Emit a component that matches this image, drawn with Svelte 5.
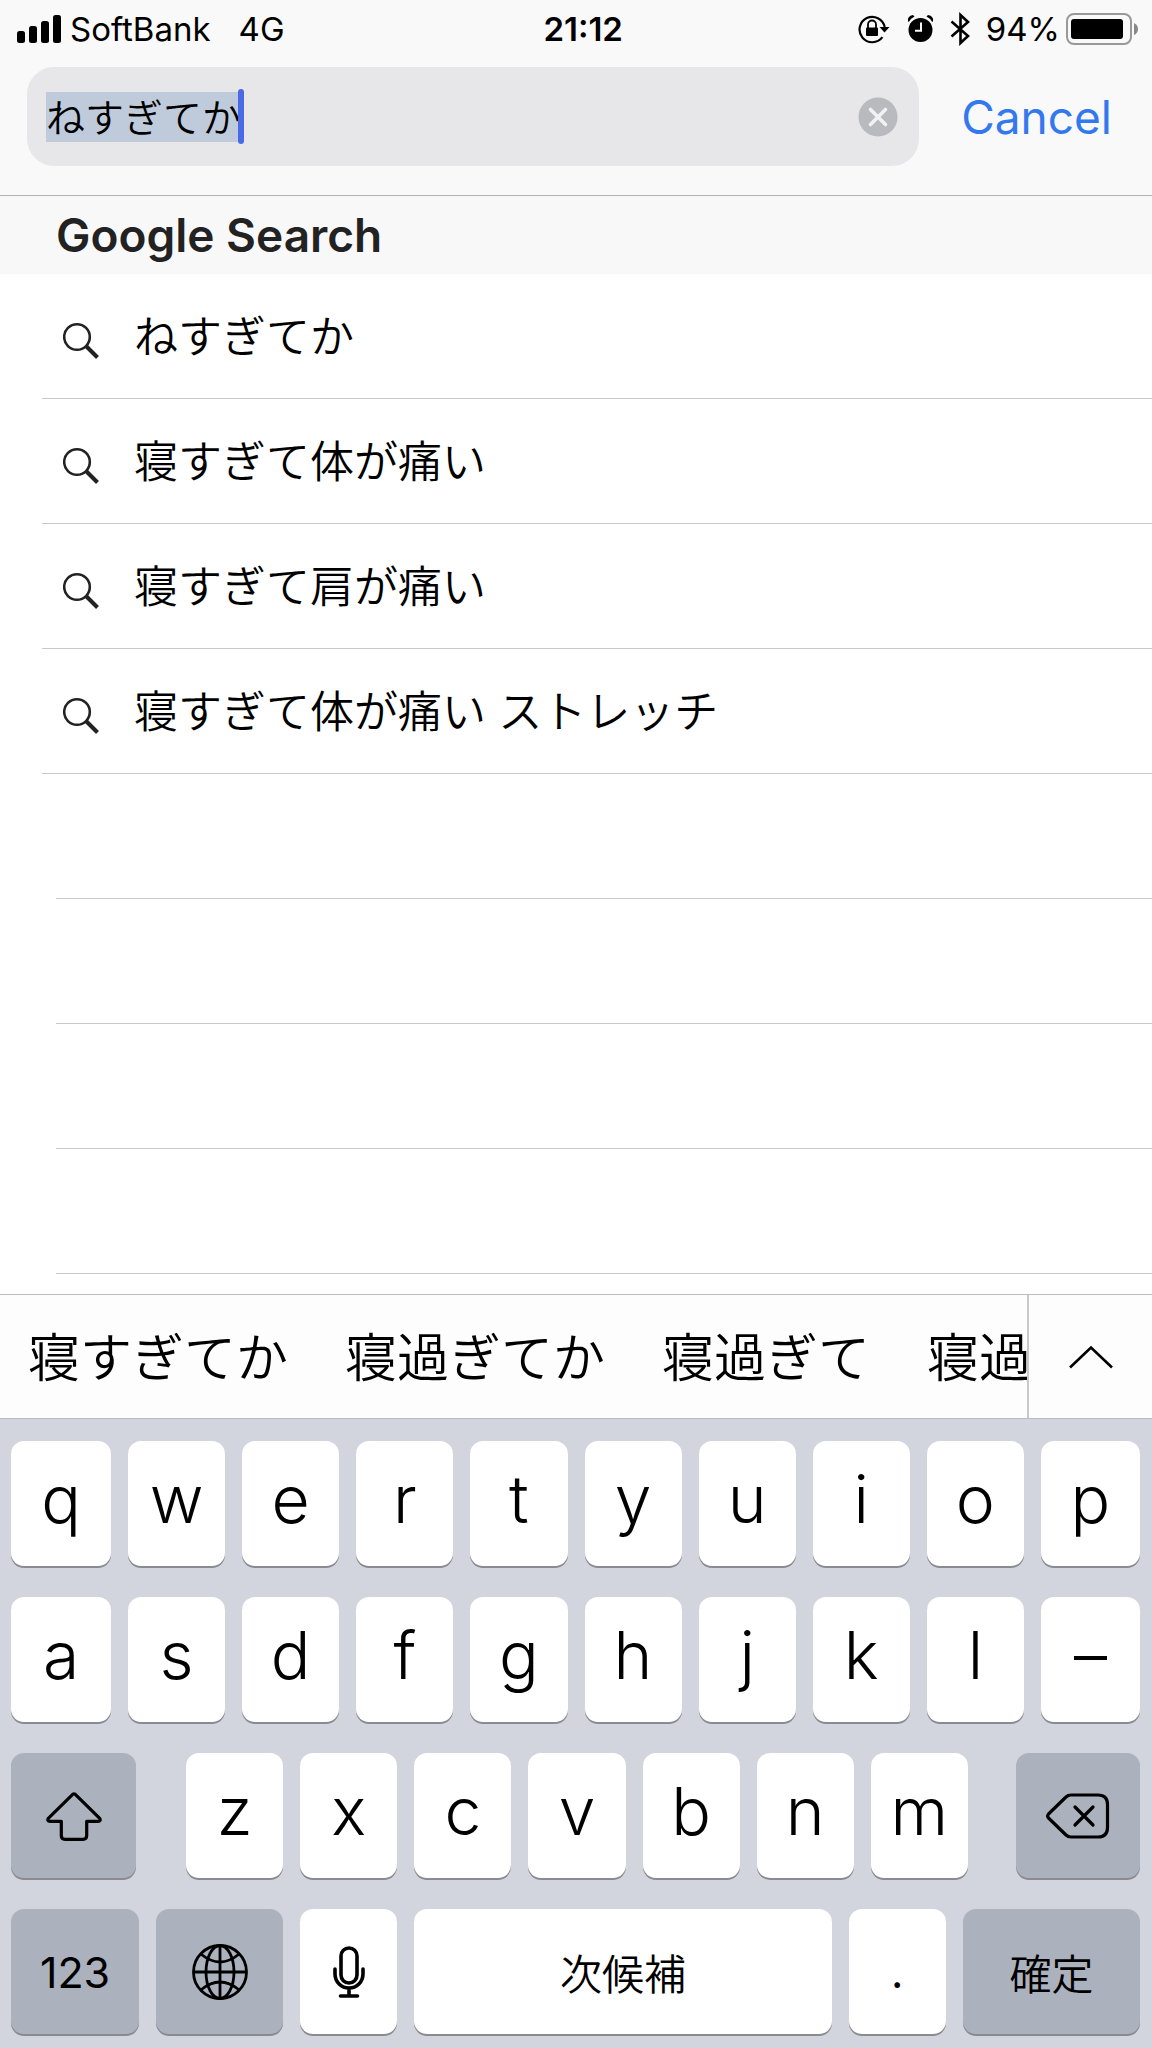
<script>
    let query = 'ねすぎてか';

    const suggestions = [
        'ねすぎてか',
        '寝すぎて体が痛い',
        '寝すぎて肩が痛い',
        '寝すぎて体が痛い ストレッチ'
    ];
    const emptyRows = [1, 2, 3, 4];
    const candidates = ['寝すぎてか', '寝過ぎてか', '寝過ぎて', '寝過ぎ'];

    const topRow = ['q', 'w', 'e', 'r', 't', 'y', 'u', 'i', 'o', 'p'];
    const middleRow = ['a', 's', 'd', 'f', 'g', 'h', 'j', 'k', 'l', '–'];
    const bottomRow = ['z', 'x', 'c', 'v', 'b', 'n', 'm'];

    function type(char) {
        query += char;
    }

    function backspace() {
        query = query.slice(0, -1);
    }

    function clear() {
        query = '';
    }
</script>

<div class="screen">
    <header>
        <div class="status">
            <div class="status-left">
                <svg width="45" height="28" viewBox="0 0 45 28" aria-hidden="true">
                    <rect x="0" y="16" width="8" height="12" rx="2.5" />
                    <rect x="12" y="11" width="8" height="17" rx="2.5" />
                    <rect x="24" y="6" width="8" height="22" rx="2.5" />
                    <rect x="36" y="0" width="8" height="28" rx="2.5" />
                </svg>
                <span class="carrier">SoftBank</span>
                <span>4G</span>
            </div>
            <div class="time">21:12</div>
            <div class="status-right">
                <svg class="lock" width="32" height="30" viewBox="0 0 32 30" aria-hidden="true">
                    <path d="M24.4 23.2 A12.7 12.7 0 1 1 26.7 13" fill="none" stroke="#000" stroke-width="2.2" />
                    <path d="M21.5 13 H31.5 L26.5 18.5 Z" />
                    <rect x="8" y="13.5" width="12" height="8.5" rx="1" />
                    <path d="M10 14 V10.5 a4 4 0 0 1 8 0 V14" fill="none" stroke="#000" stroke-width="1.8" />
                </svg>
                <svg class="alarm" width="27" height="30" viewBox="0 0 27 30" aria-hidden="true">
                    <circle cx="13.5" cy="16" r="12" />
                    <path d="M1 7.500 Q0 2 6 1 L7.500 2.500 Q3.500 4.500 2 7.800 Z M26 7.500 Q27 2 21 1 L19.500 2.500 Q23.500 4.500 25 7.800 Z" />
                    <path d="M14 8.500 V16.700 H8" fill="none" stroke="#f9f9f9" stroke-width="2" />
                </svg>
                <svg class="bluetooth" width="20" height="34" viewBox="0 0 20 34" aria-hidden="true">
                    <path d="M1.500 9.500 L18 24 L10.500 31 V3 L18 10 L1.500 24.500" fill="none" stroke="#000" stroke-width="2.6" />
                </svg>
                <span>94%</span>
                <svg class="battery" width="73" height="32" viewBox="0 0 73 32" aria-hidden="true">
                    <rect x="1" y="1" width="64" height="30" rx="7" fill="none" stroke="#999" stroke-width="2" />
                    <rect x="5" y="6" width="52" height="20" rx="3" />
                    <path d="M68 10 Q72 12 72 16 T68 22 Z" fill="#888" />
                </svg>
            </div>
        </div>

        <div class="search-bar">
            <div class="field">
                <div class="marked">
                    <input type="text" aria-label="Search" bind:value={query}>
                    <span class="caret"></span>
                </div>
                <button type="button" class="clear" aria-label="Clear" on:click={clear}>
                    <svg width="40" height="40" viewBox="0 0 40 40">
                        <circle cx="20" cy="20" r="19.5" fill="#b8babd" />
                        <path d="M12.500 12.500 L27.500 27.500 M27.500 12.500 L12.500 27.500" stroke="#f2f2f3" stroke-width="3.6" stroke-linecap="round" />
                    </svg>
                </button>
            </div>
            <button type="button" class="cancel">Cancel</button>
        </div>
    </header>

    <main>
        <h2>Google Search</h2>
        <ul>
            {#each suggestions as suggestion}
                <li>
                    <button type="button" class="suggestion">
                        <svg width="36" height="50" viewBox="0 0 36 50" aria-hidden="true">
                            <circle cx="14" cy="26" r="12.800" fill="none" stroke="#222" stroke-width="2.600" />
                            <path d="M23 35 L34.500 46.500" stroke="#222" stroke-width="4" />
                        </svg>
                        <span>{suggestion}</span>
                    </button>
                </li>
            {/each}
            {#each emptyRows as row (row)}
                <li class="empty"></li>
            {/each}
        </ul>
    </main>

    <div class="candidates">
        <div class="candidate-list">
            {#each candidates as candidate}
                <button type="button">{candidate}</button>
            {/each}
        </div>
        <button type="button" class="expand" aria-label="Show more">
            <svg width="44" height="24" viewBox="0 0 44 24">
                <path d="M1 22.500 L22 2.500 L43 22.500" fill="none" stroke="#000" stroke-width="2.600" />
            </svg>
        </button>
    </div>

    <div class="keyboard">
        <div class="keys ten">
            {#each topRow as key}
                <button type="button" class="key letter" on:click={() => type(key)}>{key}</button>
            {/each}
        </div>
        <div class="keys ten">
            {#each middleRow as key}
                <button type="button" class="key letter" on:click={() => type(key)}>{key}</button>
            {/each}
        </div>
        <div class="keys third">
            <button type="button" class="key dark shift" aria-label="Shift">
                <svg width="56" height="50" viewBox="0 0 56 50">
                    <path d="M26.700 3.300 L2.300 27.300 Q0.800 30.300 4 30.300 H15.300 V44.500 Q15.300 48.300 19 48.300 H37 Q40.700 48.300 40.700 44.500 V30.300 H52 Q55.200 30.300 53.700 27.300 L29.300 3.300 Q28 2.300 26.700 3.300 Z" fill="none" stroke="#000" stroke-width="3.200" stroke-linejoin="round" />
                </svg>
            </button>
            {#each bottomRow as key}
                <button type="button" class="key letter" on:click={() => type(key)}>{key}</button>
            {/each}
            <button type="button" class="key dark delete" aria-label="Delete" on:click={backspace}>
                <svg width="64" height="48" viewBox="0 0 64 48">
                    <path d="M25 3 H52 Q61.500 3 61.500 12.500 V35.500 Q61.500 45 52 45 H25 Q22 45 20 43 L2.500 26 Q0.800 24 2.500 22 L20 5 Q22 3 25 3 Z" fill="none" stroke="#000" stroke-width="3.200" stroke-linejoin="round" />
                    <path d="M29 15 L47 33 M47 15 L29 33" stroke="#000" stroke-width="3.200" stroke-linecap="round" />
                </svg>
            </button>
        </div>
        <div class="keys fourth">
            <button type="button" class="key dark numbers">123</button>
            <button type="button" class="key dark" aria-label="Next keyboard">
                <svg width="56" height="56" viewBox="0 0 56 56" fill="none" stroke="#000" stroke-width="2.800">
                    <circle cx="28" cy="28" r="26.500" />
                    <ellipse cx="28" cy="28" rx="14" ry="26.500" />
                    <path d="M28 1.500 V54.500 M1.500 28 H54.500" />
                    <path d="M9.500 10.500 Q28 25.500 46.500 10.500 M9.500 45.500 Q28 30.500 46.500 45.500" />
                </svg>
            </button>
            <button type="button" class="key" aria-label="Dictation">
                <svg width="32" height="52" viewBox="0 0 32 52" fill="none" stroke="#000" stroke-width="3.600" stroke-linecap="round">
                    <rect x="8" y="2" width="16" height="35" rx="8" />
                    <path d="M2 23 V28 A14 14 0 0 0 30 28 V23 M16 42 V50 M7.500 50 H24.500" />
                </svg>
            </button>
            <button type="button" class="key">次候補</button>
            <button type="button" class="key numbers" on:click={() => type('.')}>.</button>
            <button type="button" class="key dark">確定</button>
        </div>
    </div>
</div>

<style>
    :global(body) {
        margin: 0;
        background: #fff;
    }

    .screen {
        font-family: Inter, "Noto Sans CJK JP", sans-serif;
        color: #000;
    }

    button {
        border: 0;
        padding: 0;
        margin: 0;
        background: none;
        font: inherit;
        color: inherit;
    }

    svg {
        display: block;
        flex: none;
    }

    header {
        background: #f9f9f9;
        border-bottom: 1px solid #b4b4b6;
        padding-bottom: 29px;
    }

    .status {
        display: grid;
        grid-template-columns: 51fr auto 50fr;
        align-items: center;
        height: 57px;
        padding: 0 13px 0 17px;
        font-size: 33px;
    }
    .status-left,
    .status-right {
        display: flex;
        align-items: center;
    }
    .status-right {
        justify-content: flex-end;
    }
    .carrier {
        margin: 0 28px 0 8px;
    }
    .time {
        font-weight: 600;
    }
    .lock {
        margin-right: 17px;
    }
    .alarm {
        margin-right: 16px;
    }
    .bluetooth {
        margin-right: 16px;
    }
    .battery {
        margin-left: 6px;
    }

    .search-bar {
        display: flex;
        align-items: center;
        padding: 10px 40px 0 27px;
        gap: 42px;
    }
    .field {
        flex: 1;
        display: flex;
        align-items: center;
        justify-content: space-between;
        height: 99px;
        padding: 0 21px 0 19px;
        border-radius: 27px;
        background: #e7e7e9;
    }
    .marked {
        position: relative;
        display: flex;
    }
    input {
        box-sizing: border-box;
        width: 5em;
        height: 50px;
        border: 0;
        padding: 0 0 4px;
        outline: none;
        background: #bfcbdb;
        color: #000;
        font-family: "Noto Sans CJK JP", sans-serif;
        font-weight: 350;
        font-size: 39px;
    }
    .caret {
        position: absolute;
        top: -3px;
        right: -3px;
        width: 6px;
        height: 55px;
        border-radius: 3px;
        background: #4a69e6;
    }
    .cancel {
        color: #3478f0;
        font-size: 46px;
    }

    h2 {
        margin: 0;
        padding-left: 56px;
        background: #f8f8f8;
        color: #222;
        font-size: 46px;
        font-weight: 600;
        line-height: 78px;
    }
    ul {
        list-style: none;
        margin: 0;
        padding: 0 0 20px 42px;
    }
    li {
        box-sizing: border-box;
        height: 125px;
        border-bottom: 1px solid #c8c8cb;
    }
    .empty {
        margin-left: 14px;
    }
    .suggestion {
        display: flex;
        align-items: center;
        gap: 35px;
        width: 100%;
        height: 100%;
        padding-left: 21px;
        font-size: 44px;
        font-weight: 350;
        text-align: left;
    }
    .suggestion span {
        padding-bottom: 4px;
    }

    .candidates {
        display: flex;
        height: 123px;
        border-top: 1px solid #b9bcc8;
        border-bottom: 1px solid #b9bcc8;
        background: #fdfdfe;
    }
    .candidate-list {
        flex: 1;
        min-width: 0;
        display: flex;
        gap: 57px;
        overflow: hidden;
        padding: 0 0 4px 28px;
        font-size: 52px;
        font-weight: 350;
    }
    .candidate-list button {
        flex: none;
        white-space: nowrap;
    }
    .expand {
        width: 125px;
        border-left: 2px solid #c9c9cd;
        display: flex;
        align-items: center;
        justify-content: center;
    }

    .keyboard {
        display: flex;
        flex-direction: column;
        gap: 31px;
        padding: 22px 12px 14px 11px;
        background: #d2d5dd;
    }
    .keys {
        display: grid;
        gap: 17px;
    }
    .ten {
        grid-template-columns: 100fr repeat(8, 97fr) 99fr;
    }
    .third {
        grid-template-columns: 158fr repeat(7, 97fr) 155fr;
    }
    .fourth {
        grid-template-columns: 128fr 127fr 97fr 417fr 97fr 177fr;
    }
    .key {
        min-width: 0;
        height: 125px;
        display: flex;
        align-items: center;
        justify-content: center;
        border-radius: 13px;
        background: #fff;
        box-shadow: 0 2px 0 #898b90;
        font-size: 42px;
        font-weight: 350;
    }
    .letter {
        padding-bottom: 10px;
        font-size: 66px;
    }
    .dark {
        background: #acb2bd;
    }
    .numbers {
        font-size: 43px;
        font-weight: 400;
    }
    .shift {
        margin-right: 33px;
    }
    .delete {
        margin-left: 31px;
    }
</style>
